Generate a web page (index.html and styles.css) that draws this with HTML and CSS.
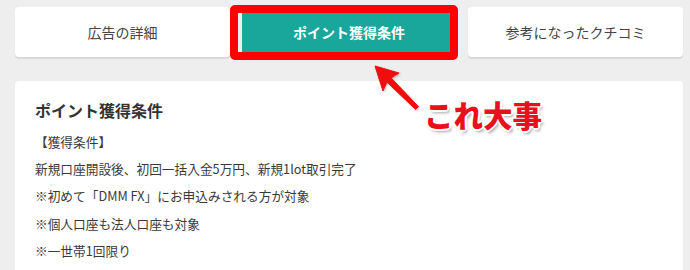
FILE: index.html
```html
<!DOCTYPE html>
<html lang="ja">
<head>
<meta charset="utf-8">
<title>ポイント獲得条件</title>
<link rel="stylesheet" href="styles.css">
</head>
<body>
<div class="page">
  <nav class="tabs">
    <div class="tab">広告の詳細</div>
    <div class="tab tab-active">ポイント獲得条件</div>
    <div class="tab">参考になったクチコミ</div>
  </nav>
  <section class="card">
    <h2 class="card-title">ポイント獲得条件</h2>
    <p class="line">【獲得条件】</p>
    <p class="line">新規口座開設後、初回一括入金5万円、新規1lot取引完了</p>
    <p class="line">※初めて「DMM FX」にお申込みされる方が対象</p>
    <p class="line">※個人口座も法人口座も対象</p>
    <p class="line">※一世帯1回限り</p>
  </section>

  <div class="highlight-box"></div>
  <svg class="arrow" width="60" height="56" viewBox="0 0 60 56">
    <polygon points="10,8 34,15 26.1,19.9 53.4,48.6 50.6,51.4 21.9,24.1 18,33" fill="#f20d0d" stroke="#f20d0d" stroke-width="1" stroke-linejoin="round"/>
  </svg>
  <div class="note">これ大事</div>
</div>
</body>
</html>
```

FILE: styles.css
```css
html, body {
  margin: 0;
  padding: 0;
}
body {
  background: #eeeeee;
  font-family: "Noto Sans CJK JP", "Noto Sans", sans-serif;
  color: #333;
}
.page {
  position: relative;
  width: 690px;
  height: 270px;
  overflow: hidden;
  padding: 7px 7px 0 15px;
  box-sizing: border-box;
}
.tabs {
  display: grid;
  grid-template-columns: 215px 215px 215px;
  column-gap: 11.5px;
}
.tab {
  height: 50px;
  background: #fff;
  border-radius: 4px;
  box-shadow: 0 2px 1px rgba(0, 0, 0, 0.09);
  display: flex;
  align-items: center;
  justify-content: center;
  font-size: 14px;
  color: #444;
}
.tab-active {
  background: #19a79c;
  color: #fff;
  font-weight: bold;
}
.card {
  margin-top: 24px;
  background: #fff;
  border-radius: 4px;
  padding: 17px 20px 20px;
  height: 300px;
}
.card-title {
  margin: 0 0 6px;
  font-size: 16px;
  line-height: 24px;
  font-weight: bold;
  color: #333;
}
.line {
  margin: 0;
  font-size: 12.7px;
  line-height: 27.2px;
  color: #3a3a3a;
}
.highlight-box {
  position: absolute;
  left: 230px;
  top: 5px;
  width: 228px;
  height: 55px;
  box-sizing: border-box;
  border: 8px solid #ff0000;
  border-radius: 5px;
}
.arrow {
  position: absolute;
  left: 365px;
  top: 58px;
  filter: drop-shadow(1px 1px 1px rgba(0, 0, 0, 0.25));
}
.note {
  position: absolute;
  left: 424px;
  top: 100px;
  font-size: 29.5px;
  line-height: 29px;
  font-weight: 900;
  color: #e8101a;
  white-space: nowrap;
  text-shadow:
    1px 1px 0 #fff, -1px -1px 0 #fff, 1px -1px 0 #fff, -1px 1px 0 #fff,
    2px 0 0 #fff, -2px 0 0 #fff, 0 2px 0 #fff, 0 -2px 0 #fff,
    2px 3px 3px rgba(0, 0, 0, 0.35);
}
```
